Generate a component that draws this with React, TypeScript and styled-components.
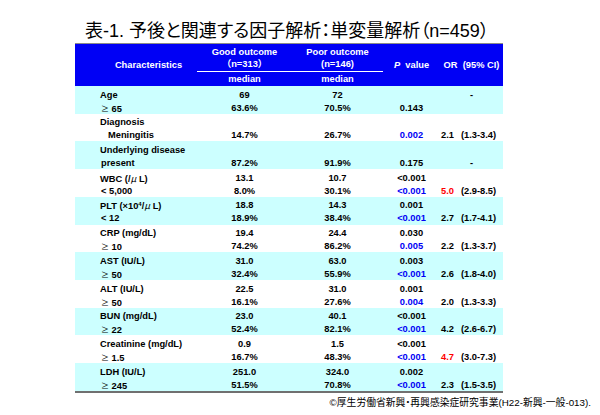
import React from 'react'
import styled, { createGlobalStyle } from 'styled-components'

const GlobalStyle = createGlobalStyle`
  html, body {
    margin: 0;
    padding: 0;
    background: #ffffff;
  }
  body {
    width: 600px;
    height: 415px;
    overflow: hidden;
    font-family: "Liberation Sans", Arial, "Noto Sans CJK JP", sans-serif;
  }
`

const COLS = '122px 95px 91px 57px 63px'
const CYAN = '#ccffff'
const BLUE = '#0000f5'

const Page = styled.div`
  width: 600px;
  height: 415px;
  display: flex;
  flex-direction: column;
`

const Title = styled.h1`
  margin: 0;
  height: 43px;
  padding: 20px 0 0 85px;
  box-sizing: border-box;
  font-family: "Liberation Sans", "Noto Sans CJK JP", sans-serif;
  font-feature-settings: "palt";
  font-weight: normal;
  font-size: 18px;
  line-height: 23px;
  color: #000;
  white-space: nowrap;
`

const Table = styled.div`
  margin-left: 75px;
  width: 428px;
  border-top: 1px solid #8a8a8a;
  border-bottom: 2px solid #707070;
`

const Header = styled.div`
  display: grid;
  grid-template-columns: ${COLS};
  grid-template-rows: 28px 14px;
  background: ${BLUE};
  color: #fff;
  font-weight: bold;
  font-size: 9.3px;
`

const HeadCell = styled.div<{ $col: number; $row?: string; $line?: boolean; $pad?: number }>`
  grid-column: ${p => p.$col};
  grid-row: ${p => p.$row || '1 / 3'};
  display: flex;
  flex-direction: column;
  align-items: center;
  justify-content: center;
  line-height: 12px;
  white-space: nowrap;
  padding-left: ${p => p.$pad || 0}px;
  ${p => p.$line && 'border-bottom: 1px solid #ffffff;'}
`

const Row = styled.div<{ $shade: boolean }>`
  display: grid;
  grid-template-columns: ${COLS};
  grid-template-rows: 13px 13px;
  height: 27.73px;
  box-sizing: border-box;
  padding-top: 2.5px;
  background: ${p => (p.$shade ? CYAN : '#ffffff')};
  font-weight: bold;
  font-size: 9.3px;
  line-height: 13px;
  color: #000;
`

const Label = styled.div<{ $indent?: number }>`
  padding-left: ${p => 25 + (p.$indent || 0)}px;
  white-space: nowrap;
`

const Value = styled.div<{ $blue?: boolean }>`
  text-align: center;
  white-space: nowrap;
  color: ${p => (p.$blue ? BLUE : '#000')};
`

const OrCell = styled.div`
  display: flex;
  align-items: center;
  white-space: nowrap;
`

const OrNum = styled.span<{ $red?: boolean }>`
  width: 14px;
  text-align: right;
  color: ${p => (p.$red ? '#ff0000' : '#000')};
`

const Ci = styled.span`
  margin-left: 7px;
`

const Dash = styled.div`
  text-align: center;
`

const Sym = styled.span`
  font-family: "Noto Sans CJK JP", sans-serif;
  font-weight: normal;
  font-size: 8px;
`

const Mu = styled.span`
  font-family: "Noto Sans CJK JP", sans-serif;
  font-weight: normal;
  font-style: italic;
`

const Sup = styled.span`
  font-size: 6px;
  line-height: 0;
  position: relative;
  top: -3px;
`

const Footnote = styled.div`
  margin-top: 4px;
  padding-right: 9px;
  text-align: right;
  font-family: "Liberation Sans", "Noto Sans CJK JP", sans-serif;
  font-feature-settings: "palt";
  font-size: 9.8px;
  line-height: 12px;
  color: #000;
  white-space: nowrap;
`

type Item = {
  label: React.ReactNode
  sub: React.ReactNode
  subIndent?: number
  good: [string, string]
  poor: [string, string]
  p: [string, string]
  pBlue?: boolean
  or?: string
  orRed?: boolean
  ci?: string
  dash?: 1 | 2
}

const ge = (v: string) => (
  <>
    <Sym>≥</Sym> {v}
  </>
)

const rows: Item[] = [
  { label: 'Age', sub: ge('65'), subIndent: 1, good: ['69', '63.6%'], poor: ['72', '70.5%'], p: ['', '0.143'], dash: 1 },
  { label: 'Diagnosis', sub: 'Meningitis', subIndent: 8, good: ['', '14.7%'], poor: ['', '26.7%'], p: ['', '0.002'], pBlue: true, or: '2.1', ci: '(1.3-3.4)' },
  { label: 'Underlying disease', sub: 'present', subIndent: 1, good: ['', '87.2%'], poor: ['', '91.9%'], p: ['', '0.175'], dash: 2 },
  { label: <>WBC (/<Mu>μ</Mu> L)</>, sub: '< 5,000', subIndent: 1, good: ['13.1', '8.0%'], poor: ['10.7', '30.1%'], p: ['<0.001', '<0.001'], pBlue: true, or: '5.0', orRed: true, ci: '(2.9-8.5)' },
  { label: <>PLT (×10<Sup>4</Sup>/<Mu>μ</Mu> L)</>, sub: '< 12', subIndent: 1, good: ['18.8', '18.9%'], poor: ['14.3', '38.4%'], p: ['0.001', '<0.001'], pBlue: true, or: '2.7', ci: '(1.7-4.1)' },
  { label: 'CRP (mg/dL)', sub: ge('10'), subIndent: 1, good: ['19.4', '74.2%'], poor: ['24.4', '86.2%'], p: ['0.030', '0.005'], pBlue: true, or: '2.2', ci: '(1.3-3.7)' },
  { label: 'AST (IU/L)', sub: ge('50'), subIndent: 1, good: ['31.0', '32.4%'], poor: ['63.0', '55.9%'], p: ['0.003', '<0.001'], pBlue: true, or: '2.6', ci: '(1.8-4.0)' },
  { label: 'ALT (IU/L)', sub: ge('50'), subIndent: 1, good: ['22.5', '16.1%'], poor: ['31.0', '27.6%'], p: ['0.001', '0.004'], pBlue: true, or: '2.0', ci: '(1.3-3.3)' },
  { label: 'BUN (mg/dL)', sub: ge('22'), subIndent: 1, good: ['23.0', '52.4%'], poor: ['40.1', '82.1%'], p: ['<0.001', '<0.001'], pBlue: true, or: '4.2', ci: '(2.6-6.7)' },
  { label: 'Creatinine (mg/dL)', sub: ge('1.5'), subIndent: 1, good: ['0.9', '16.7%'], poor: ['1.5', '48.3%'], p: ['<0.001', '<0.001'], pBlue: true, or: '4.7', orRed: true, ci: '(3.0-7.3)' },
  { label: 'LDH (IU/L)', sub: ge('245'), subIndent: 1, good: ['251.0', '51.5%'], poor: ['324.0', '70.8%'], p: ['0.002', '<0.001'], pBlue: true, or: '2.3', ci: '(1.5-3.5)' },
]

const DataRow: React.FC<{ item: Item; shade: boolean }> = ({ item, shade }) => (
  <Row $shade={shade}>
    <Label>{item.label}</Label>
    <Value>{item.good[0]}</Value>
    <Value>{item.poor[0]}</Value>
    <Value>{item.p[0]}</Value>
    {item.dash === 1 ? <Dash>-</Dash> : <div />}
    <Label $indent={item.subIndent}>{item.sub}</Label>
    <Value>{item.good[1]}</Value>
    <Value>{item.poor[1]}</Value>
    <Value $blue={item.pBlue}>{item.p[1]}</Value>
    {item.dash === 2 ? (
      <Dash>-</Dash>
    ) : item.or ? (
      <OrCell>
        <OrNum $red={item.orRed}>{item.or}</OrNum>
        <Ci>{item.ci}</Ci>
      </OrCell>
    ) : (
      <div />
    )}
  </Row>
)

const App: React.FC = () => (
  <>
    <GlobalStyle />
    <Page>
      <Title>表-1. 予後と関連する因子解析：単変量解析（n=459）</Title>
      <Table>
        <Header>
          <HeadCell $col={1} $pad={25}>Characteristics</HeadCell>
          <HeadCell $col={2} $row="1" $line>
            <span>Good outcome</span>
            <span>（n=313）</span>
          </HeadCell>
          <HeadCell $col={3} $row="1" $line>
            <span>Poor outcome</span>
            <span>(n=146)</span>
          </HeadCell>
          <HeadCell $col={4}>
            <span>
              <i>P</i>&nbsp; value
            </span>
          </HeadCell>
          <HeadCell $col={5}>OR&nbsp; (95% CI)</HeadCell>
          <HeadCell $col={2} $row="2">median</HeadCell>
          <HeadCell $col={3} $row="2">median</HeadCell>
        </Header>
        {rows.map((r, i) => (
          <DataRow key={i} item={r} shade={i % 2 === 0} />
        ))}
      </Table>
      <Footnote>©厚生労働省新興・再興感染症研究事業(H22-新興-一般-013).</Footnote>
    </Page>
  </>
)

export default App
